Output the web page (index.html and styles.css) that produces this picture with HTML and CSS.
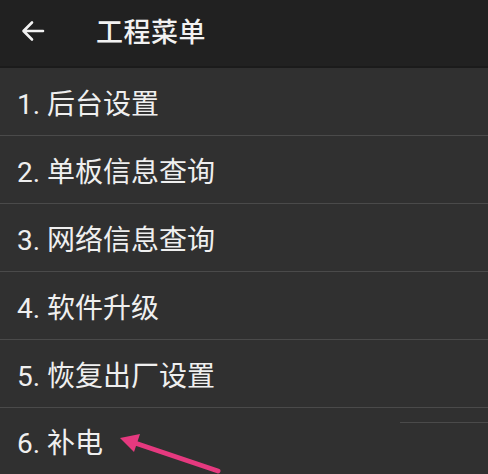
FILE: index.html
```html
<!DOCTYPE html>
<html lang="zh-CN">
<head>
    <meta charset="UTF-8">
    <meta name="viewport" content="width=device-width, initial-scale=1.0">
    <title>工程菜单</title>
    <link rel="stylesheet" href="styles.css">
</head>
<body>
    <header class="toolbar">
        <svg class="back" width="24" height="24" viewBox="0 0 24 24">
            <path d="M22 12H3M11 3.5L2.5 12L11 20.5" fill="none" stroke="#f2f2f2" stroke-width="2.6" stroke-linecap="round" stroke-linejoin="round"/>
        </svg>
        <h1>工程菜单</h1>
    </header>

    <ul class="menu">
        <li>1. 后台设置</li>
        <li>2. 单板信息查询</li>
        <li>3. 网络信息查询</li>
        <li>4. 软件升级</li>
        <li>5. 恢复出厂设置</li>
        <li class="last">
            6. 补电
            <span class="glitch"></span>
            <!-- annotation arrow pointing at the item -->
            <svg class="pointer" width="120" height="50" viewBox="0 0 120 50">
                <path d="M104 43L18 14" stroke="#e5397f" stroke-width="5" stroke-linecap="round"/>
                <path d="M6 10L26 6L20 24Z" fill="#e5397f"/>
            </svg>
        </li>
    </ul>
</body>
</html>
```

FILE: styles.css
```css
body {
    margin: 0;
    background-color: #303030;
    font-family: Roboto, "Noto Sans CJK SC", sans-serif;
    color: #efefef;
}
.toolbar {
    display: flex;
    align-items: center;
    height: 66px;
    background-color: #212121;
    border-bottom: 2px solid #1b1b1b;
}
.back {
    margin-left: 21px;
    margin-top: -4px;
}
.toolbar h1 {
    margin: 0 0 0 51px;
    margin-top: -6px;
    font-size: 27px;
    font-weight: 500;
    color: #f2f2f2;
    letter-spacing: 0.5px;
}
.menu {
    list-style: none;
    margin: 0;
    padding: 0;
}
.menu li {
    position: relative;
    display: flex;
    align-items: center;
    height: 67px;
    padding-left: 17px;
    font-size: 28px;
    border-bottom: 1px solid #4a4a4a;
}
.menu li.last {
    border-bottom: none;
    height: 66px;
}
.glitch {
    position: absolute;
    left: 400px;
    right: 0;
    top: 14px;
    height: 1px;
    background-color: #4a4a4a;
}
.pointer {
    position: absolute;
    left: 114px;
    top: 20px;
}
```
